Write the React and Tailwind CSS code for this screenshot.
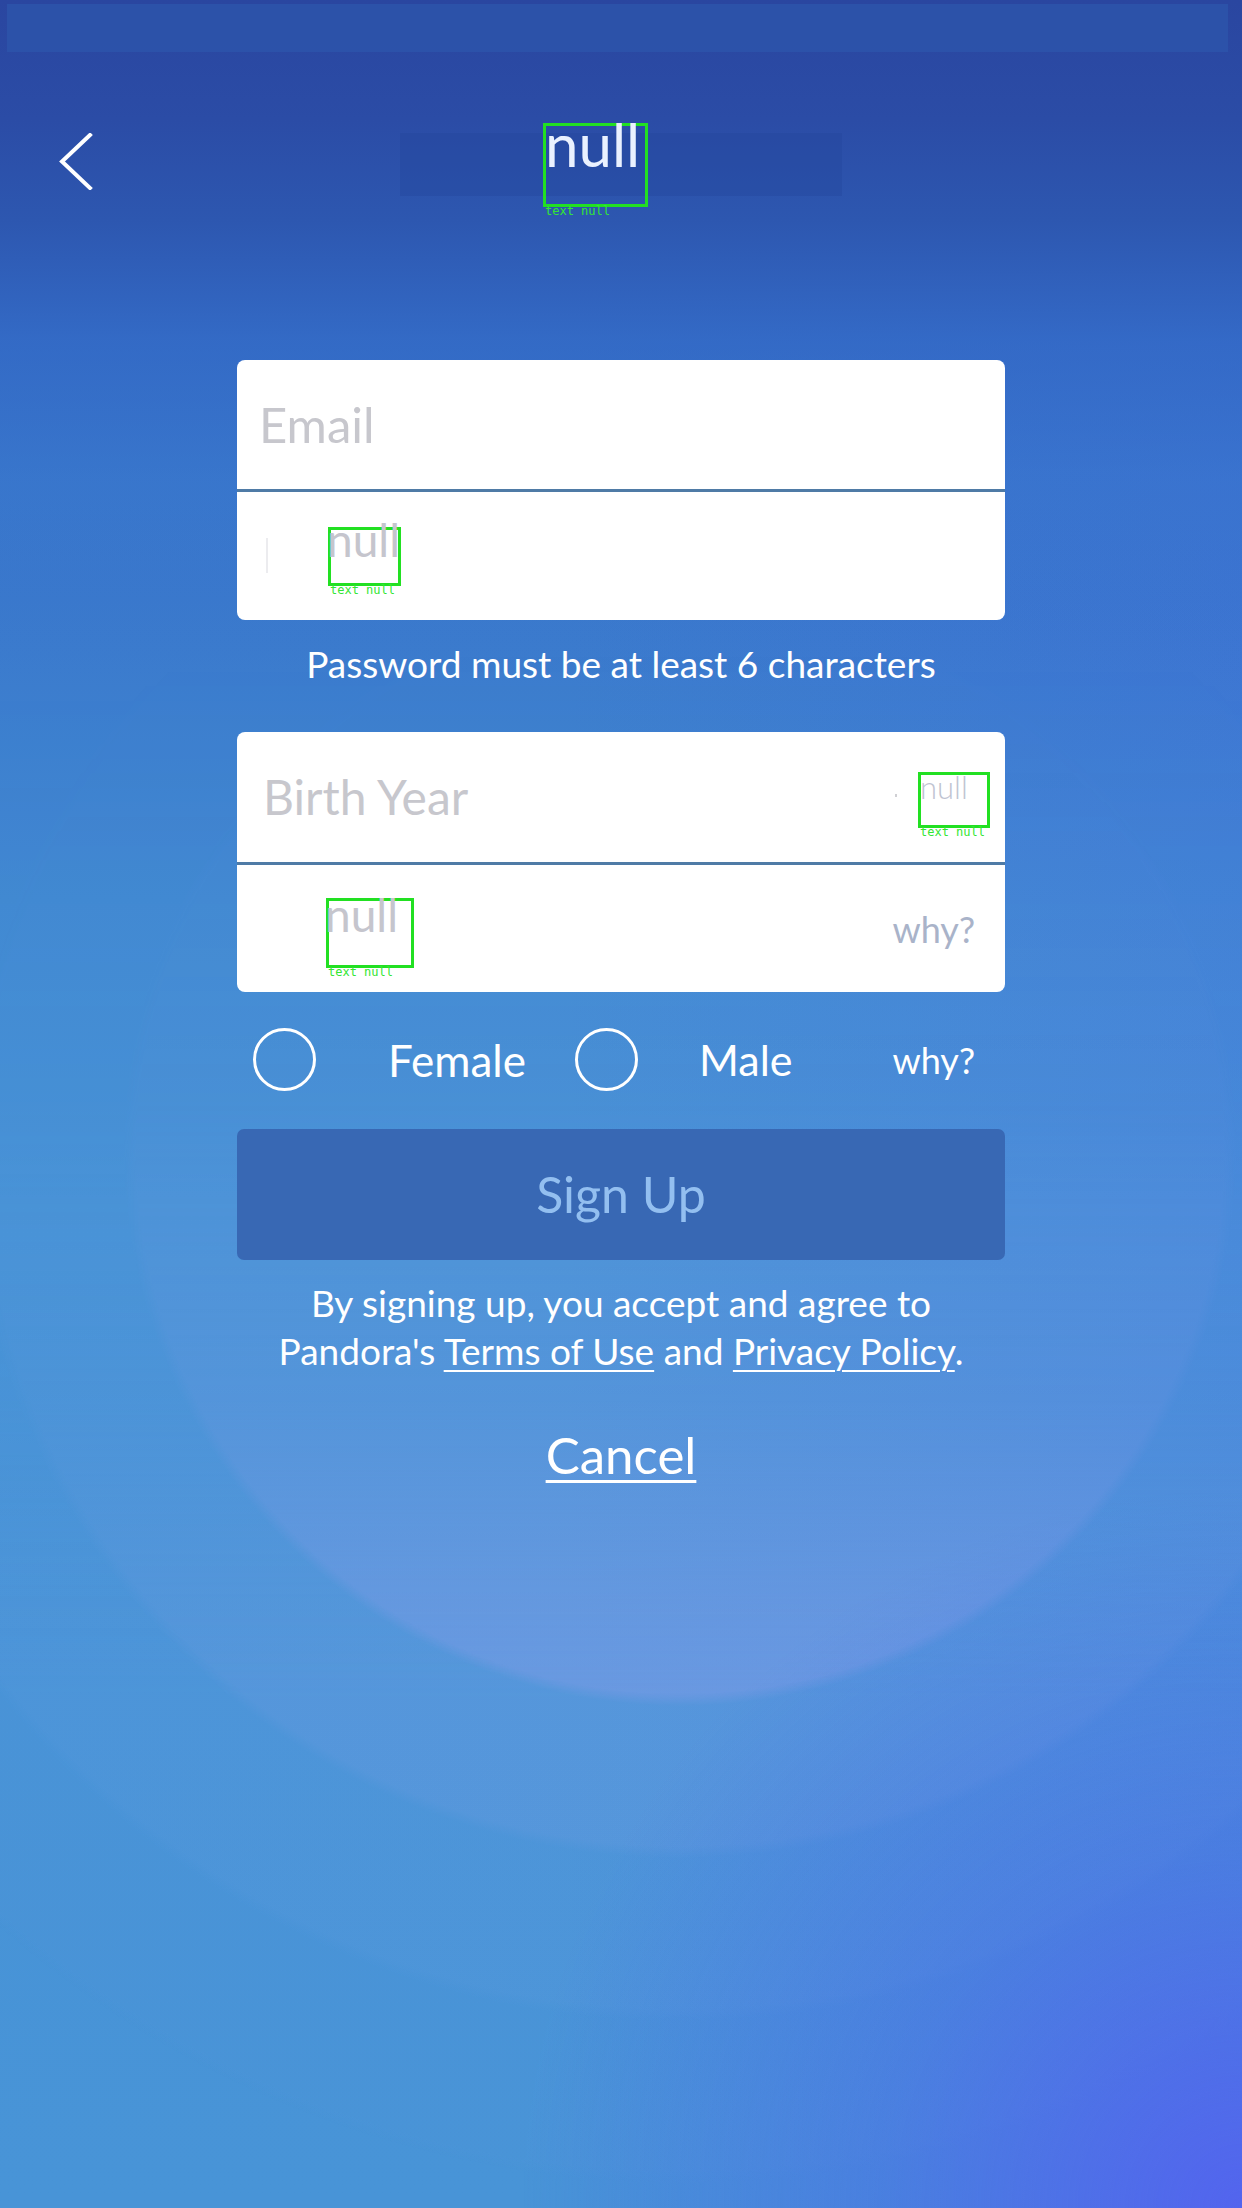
import React from "react";

function NullBox({ boxClass, textClass }) {
  return (
    <div className={`relative shrink-0 border-[3px] border-[#22e022] ${boxClass}`}>
      <div className={`leading-none whitespace-nowrap ${textClass}`}>null</div>
      <div className="absolute left-[-1px] top-full mt-[1px] font-['DejaVu_Sans_Mono',monospace] text-[12px] leading-none text-[#33e633] whitespace-nowrap">
        text null
      </div>
    </div>
  );
}

export default function App() {
  return (
    <div className="relative w-[1242px] h-[2208px] overflow-hidden font-['Lato',sans-serif] bg-[#4692d4] bg-[image:linear-gradient(180deg,#2a46a0_0px,#2b4ca6_120px,#2d57b0_220px,rgba(50,104,196,0.75)_340px,rgba(56,120,205,0.35)_480px,rgba(60,130,210,0)_680px),linear-gradient(90deg,rgba(70,90,235,0)_45%,rgba(70,90,235,0.16)_100%),linear-gradient(180deg,#3468c8_0px,#3a78cc_600px,#4189d2_900px,#4692d6_1200px,#4894d7_2208px)]">
      {/* ripple rings (decorative background) */}
      <div className="absolute inset-0 bg-[image:radial-gradient(circle_at_1242px_2208px,rgba(84,96,240,0.9)_0px,rgba(76,108,232,0.45)_360px,rgba(76,108,232,0)_720px),radial-gradient(circle_at_680px_1150px,rgba(140,160,235,0.5)_0px,rgba(140,160,235,0.5)_544px,rgba(120,160,230,0.3)_556px,rgba(120,160,230,0.3)_696px,rgba(110,160,230,0.16)_708px,rgba(110,160,230,0.16)_859px,rgba(100,155,228,0.07)_871px,rgba(100,155,228,0.07)_1021px,rgba(100,155,228,0)_1033px)] [mask-image:linear-gradient(180deg,transparent_0px,transparent_650px,rgba(0,0,0,0.12)_1100px,rgba(0,0,0,0.4)_1400px,rgba(0,0,0,0.85)_1600px,black_1700px)]" />

      <div className="relative">
        {/* status bar band */}
        <div className="h-[52px] pt-[4px] pl-[7px] pr-[14px]">
          <div className="h-[48px] bg-[#2d55ab]/80" />
        </div>

        {/* header */}
        <div className="mt-[81px] grid grid-cols-[1fr_442px_1fr] items-start">
          <div className="pl-[59px]">
            <svg width="34" height="57" viewBox="0 0 34 57" fill="none">
              <polyline
                points="31,2 3,28.5 31,55"
                stroke="white"
                strokeWidth="4"
                strokeLinecap="square"
                strokeLinejoin="miter"
              />
            </svg>
          </div>
          <div className="h-[63px] bg-[#23469c]/35 flex items-start pl-[143px]">
            <NullBox
              boxClass="w-[105px] h-[84px] mt-[-10px]"
              textClass="text-[60px] text-[#eaf1ff] mt-[-12px] ml-[-1px]"
            />
          </div>
          <div />
        </div>

        {/* email / password card */}
        <div className="mt-[164px] mx-auto w-[768px]">
          <div className="h-[129px] rounded-t-[8px] bg-white flex items-center pl-[22px] text-[49px] leading-none text-[#c7c7cd]">
            Email
          </div>
          <div className="h-[3px] bg-[#4f7ba6]" />
          <div className="h-[128px] rounded-b-[8px] bg-white flex items-start">
            <div className="mt-[46px] ml-[29px] w-[2px] h-[35px] bg-[#ececef] shrink-0" />
            <NullBox
              boxClass="ml-[60px] mt-[35px] w-[73px] h-[59px]"
              textClass="text-[46px] text-[#c5c5cd] mt-[-13px] ml-[-4px]"
            />
          </div>
        </div>

        <p className="mt-[25px] text-center text-[37px] leading-none text-white">
          Password must be at least 6 characters
        </p>

        {/* birth year / zip card */}
        <div className="mt-[50px] mx-auto w-[768px]">
          <div className="h-[130px] rounded-t-[8px] bg-white flex items-center">
            <span className="pl-[26px] text-[48px] leading-none text-[#c7c7cd]">Birth Year</span>
            <span className="ml-auto mr-[21px] w-[2px] h-[3px] bg-[#d0d0d4] mt-[-4px]" />
            <NullBox
              boxClass="w-[72px] h-[56px] mr-[15px] self-start mt-[40px]"
              textClass="text-[31px] font-light text-[#bfc4d2] mt-[-3px] ml-[-1px]"
            />
          </div>
          <div className="h-[3px] bg-[#4f7ba6]" />
          <div className="h-[127px] rounded-b-[8px] bg-white flex items-start">
            <NullBox
              boxClass="ml-[89px] mt-[33px] w-[88px] h-[70px]"
              textClass="text-[46px] text-[#c5c5cd] mt-[-9px] ml-[-4px]"
            />
            <span className="ml-auto self-center pr-[30px] text-[36px] leading-none text-[#a9b3c9]">why?</span>
          </div>
        </div>

        {/* gender */}
        <div className="mt-[36px] mx-auto w-[768px] h-[63px] flex items-center text-white">
          <div className="ml-[16px] w-[63px] h-[63px] rounded-full border-[3px] border-white shrink-0" />
          <span className="w-[259px] pl-[72px] text-[44px] leading-none">Female</span>
          <div className="w-[63px] h-[63px] rounded-full border-[3px] border-white shrink-0" />
          <span className="pl-[61px] text-[43px] leading-none">Male</span>
          <span className="ml-auto pr-[30px] text-[36px] leading-none">why?</span>
        </div>

        {/* sign up */}
        <div className="mt-[38px] mx-auto w-[768px] h-[131px] rounded-[7px] bg-[#3868b4] flex items-center justify-center pb-[2px] text-[50px] leading-none text-[#93bff0]">
          Sign Up
        </div>

        <p className="mt-[19px] text-center text-[37px] leading-[48px] text-white">
          By signing up, you accept and agree to
          <br />
          Pandora's{" "}
          <span className="underline decoration-[2px] underline-offset-[5px]">Terms of Use</span> and{" "}
          <span className="underline decoration-[2px] underline-offset-[5px]">Privacy Policy</span>.
        </p>

        <div className="mt-[54px] text-center">
          <span className="text-[51px] leading-none text-white underline decoration-[3px] underline-offset-[6px]">
            Cancel
          </span>
        </div>
      </div>
    </div>
  );
}
